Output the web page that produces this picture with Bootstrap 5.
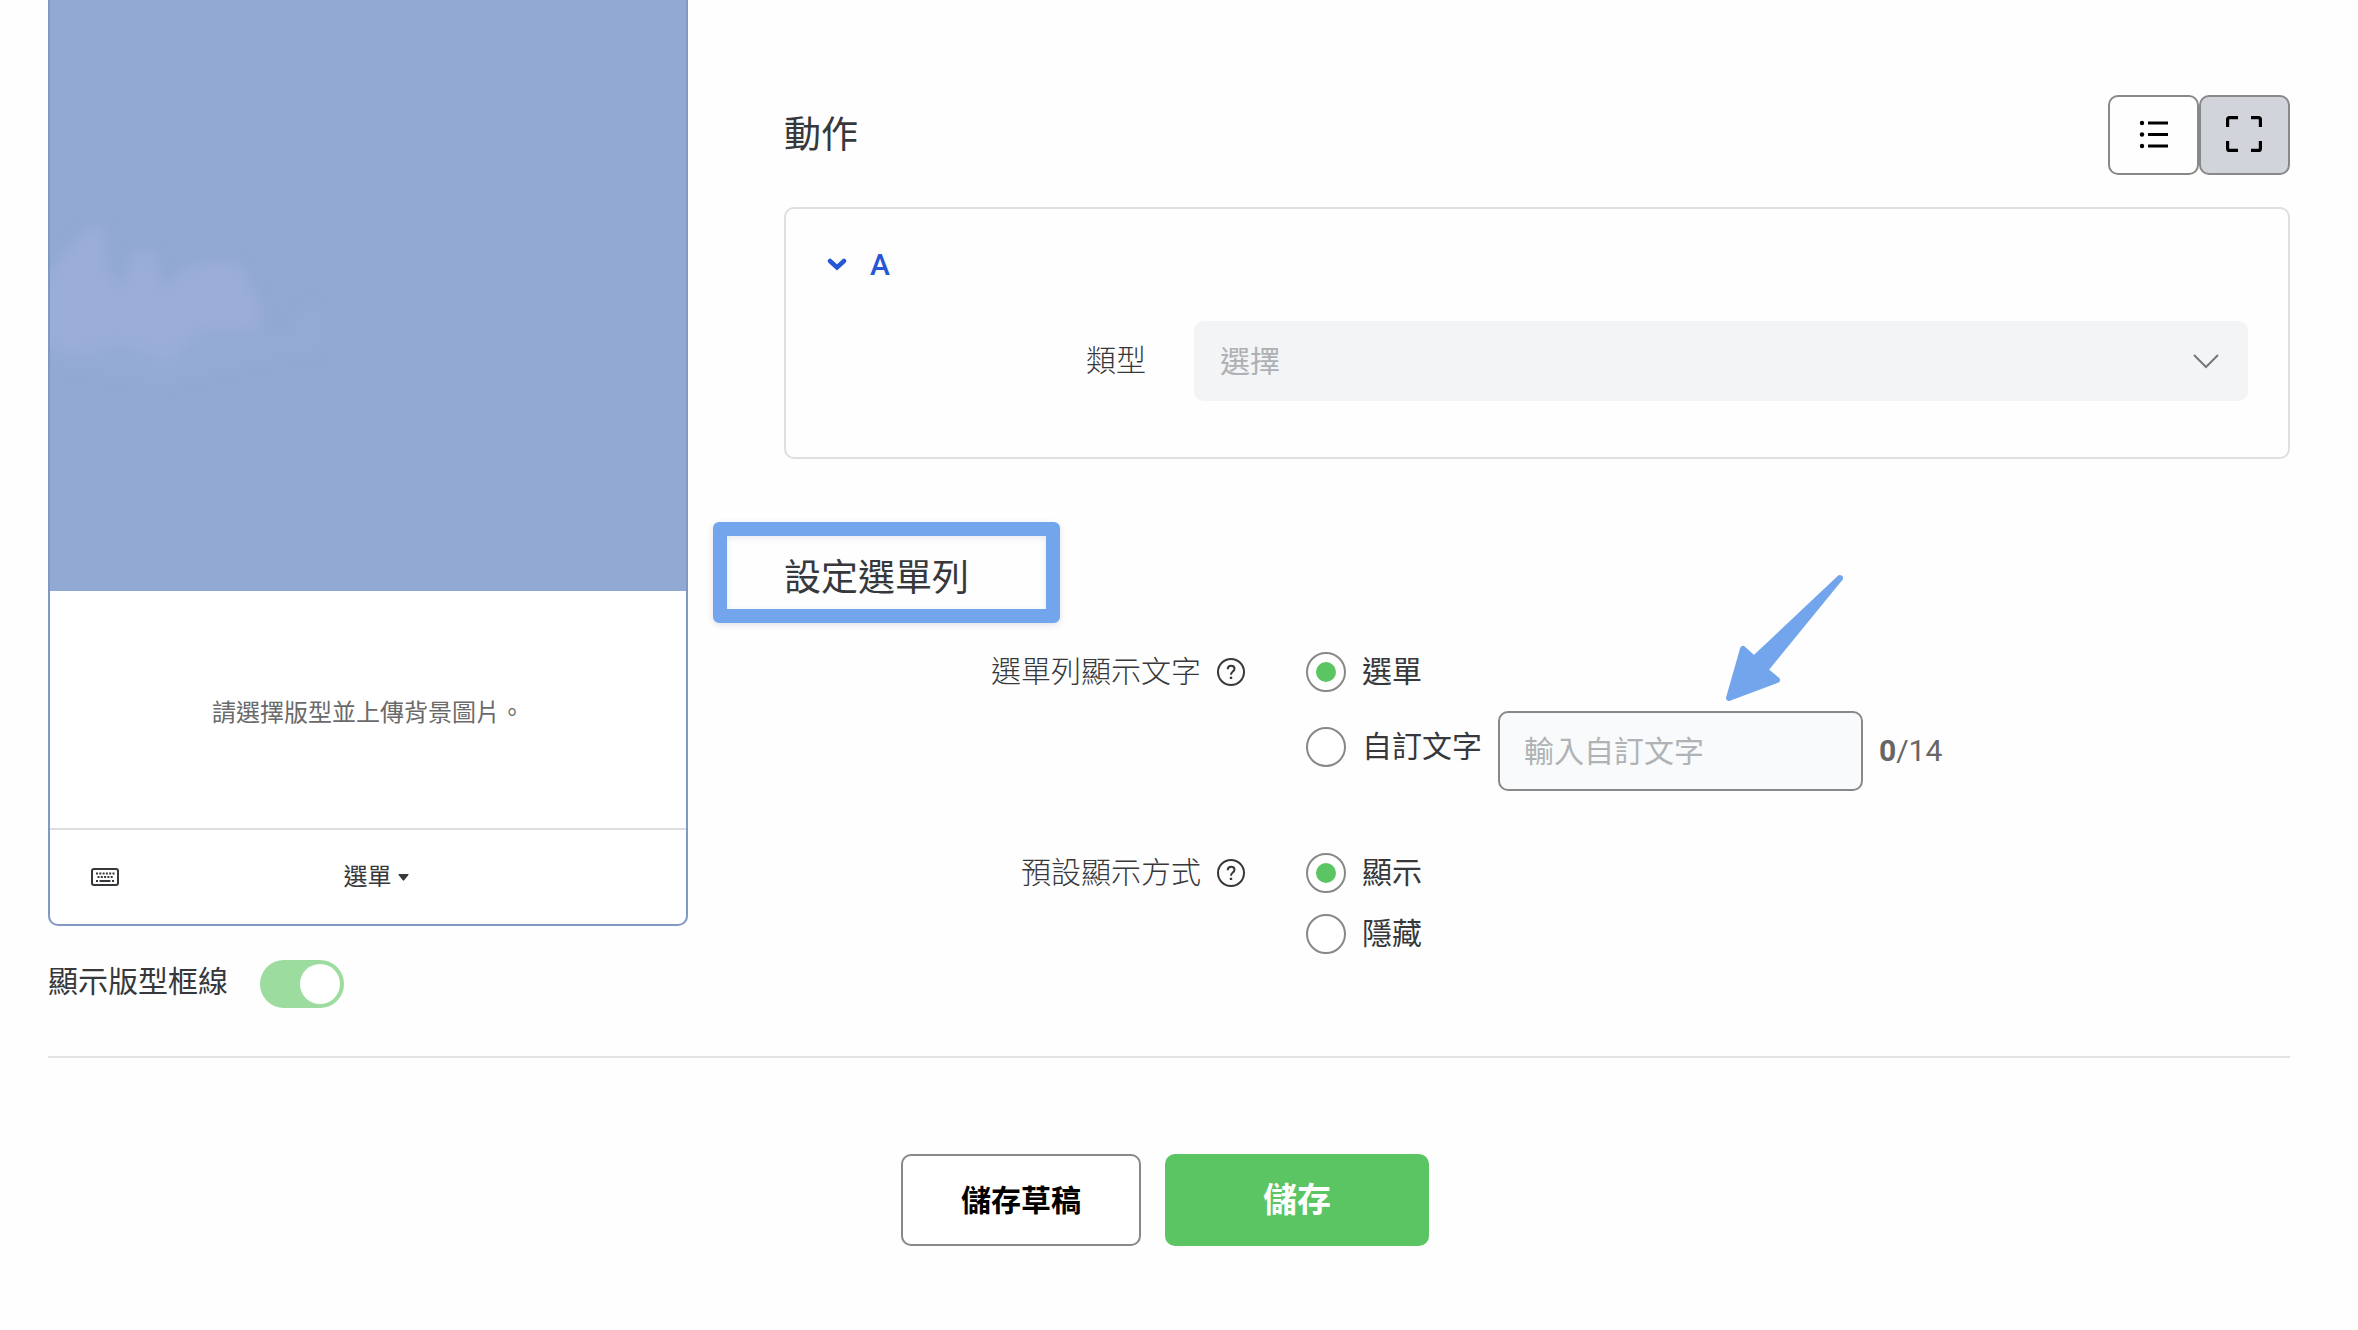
<!DOCTYPE html>
<html lang="zh-Hant">
<head>
<meta charset="utf-8">
<meta name="viewport" content="width=device-width, initial-scale=1">
<title>圖文選單</title>
<link href="https://cdn.jsdelivr.net/npm/bootstrap@5.3.0/dist/css/bootstrap.min.css" rel="stylesheet">
<style>
body { font-family: Roboto, "Noto Sans CJK TC", sans-serif; font-size: 30px; line-height: 40px; color: #36383b; background: #fefefe; }
main { padding: 0 68px 80px 48px; }
.editor { gap: 96px; }
.preview { width: 640px; }
.phone { border: 2px solid #7f98c4; border-top: 0; border-radius: 0 0 10px 10px; background: #fff; overflow: hidden; }
.sky { height: 591px; padding-top: 215px; background: #91a9d3; }
.hint { height: 237px; padding-top: 6px; font-size: 24px; color: #6a6a6a; }
.menubar { height: 96px; padding: 0 39px; border-top: 2px solid #dedede; font-size: 24px; }
.menubar button { color: inherit; font-size: inherit; gap: 6px; margin-right: 16px; }
.form-switch.frame-switch { padding: 0; margin: 30px 0 0; min-height: 0; gap: 32px; }
.form-switch.frame-switch .form-check-input { width: 84px; height: 48px; margin: 4px 0 0; border: 0; background-color: #9ddc9f; background-size: 48px 48px; opacity: 1;
  background-image: url("data:image/svg+xml,%3csvg xmlns='http://www.w3.org/2000/svg' viewBox='0 0 48 48'%3e%3ccircle cx='24' cy='24' r='20' fill='white'/%3e%3c/svg%3e"); }
.settings { padding-top: 95px; }
.section-title { font-size: 37px; line-height: 48px; font-weight: 400; margin: 0; padding-top: 2px; }
.view-btn { width: 91px; height: 80px; padding: 0; border: 2px solid #888; border-radius: 10px; }
.view-btn.active { background: #d1d4da; border-color: #888; }
.action-card { margin-top: 32px; padding: 33px 40px 56px; border: 2px solid #dfdfdf; border-radius: 10px; }
.fold { color: #2557d6; gap: 23px; font-weight: 500; text-decoration: none; line-height: 40px; }
.thin { font-weight: 300; }
.type-label { width: 320px; }
.type-row { gap: 48px; margin-top: 36px; }
.form-select.type-select { height: 80px; padding: 0 26px; font-size: 30px; font-weight: 400; color: #adb1b4; border: 0; border-radius: 10px; background-color: #f2f4f6; background-size: 28px 28px; background-position: right 28px center;
  background-image: url("data:image/svg+xml,%3csvg xmlns='http://www.w3.org/2000/svg' viewBox='0 0 28 28'%3e%3cpath d='M2 8l12 12 12-12' fill='none' stroke='%2375777a' stroke-width='2'/%3e%3c/svg%3e"); }
.bar-title { margin-top: 94px; align-self: flex-start; }
.highlight { inset: -31px -91px -20px -71px; border: 14px solid #73a5ec; border-radius: 6px; box-shadow: 0 2px 6px rgba(60, 70, 120, .15), inset 0 2px 6px rgba(60, 70, 120, .12); }
.field { gap: 60px; }
.field-name { width: 462px; gap: 16px; }
.menu-text { margin-top: 49px; }
.menu-mode { margin-top: 62px; }
.choice { gap: 16px; min-height: 0; padding: 0; margin: 0; }
.choice .form-check-input { float: none; width: 40px; height: 40px; margin: 0; border: 2px solid #888; background-color: #fff; }
.choice .form-check-input:checked { background-size: 100%; 
  background-image: url("data:image/svg+xml,%3csvg xmlns='http://www.w3.org/2000/svg' viewBox='0 0 36 36'%3e%3ccircle cx='18' cy='18' r='10' fill='%235bc463'/%3e%3c/svg%3e"); }
.custom-row { gap: 16px; margin-top: 19px; }
.custom-row .choice { height: 72px; }
.custom-input { width: 365px; height: 80px; padding: 0 24px; font-size: 30px; border: 2px solid #888; border-radius: 10px; background: #f8fafb; }
.custom-input::placeholder { color: #b0b3b5; }
.counter { color: #666; line-height: 80px; }
.arrow { left: 224px; top: -142px; }
.second { margin-top: 21px; }
.rule { margin: 48px 0 0; border-top: 2px solid #e2e2e2; opacity: 1; }
.actions { gap: 24px; margin: 96px 8px 0 0; }
.actions .btn { height: 92px; border-radius: 10px; font-weight: 700; }
.btn-draft, .btn-draft:hover { width: 240px; border: 2px solid #888; background: #fff; color: #000; font-size: 30px; }
.btn-save, .btn-save:hover { width: 264px; background: #5bc463; color: #fff; font-size: 34px; }
</style>
</head>
<body>
<main>
  <div class="editor d-flex align-items-start">
    <section class="preview flex-shrink-0">
      <div class="phone">
        <div class="sky">
          <svg class="d-block" width="290" height="180" viewBox="0 0 290 180" aria-hidden="true">
            <defs><filter id="soft" x="-20%" y="-20%" width="140%" height="140%"><feGaussianBlur stdDeviation="6"/></filter></defs>
            <g fill="#9daedb" filter="url(#soft)">
              <path d="M-10 130V70L16 36 42 10 54 12 58 54 70 72 84 38 104 34 112 72 136 52 164 46 190 48 206 80 214 104 204 116 150 116 120 146 70 128 30 140Z" opacity=".8"/>
              <path d="M-10 146 60 120 160 118 224 118 238 128 252 92 268 90 268 138 220 142 190 150 150 160 110 170 60 160Z" opacity=".25"/>
            </g>
          </svg>
        </div>
        <div class="hint d-flex align-items-center justify-content-center">請選擇版型並上傳背景圖片。</div>
        <div class="menubar d-flex align-items-center">
          <svg width="32" height="22" viewBox="0 0 32 22" fill="none" aria-hidden="true">
            <rect x="3" y="3" width="26" height="16" rx="2" stroke="#36383b" stroke-width="2"/>
            <path d="M7 7.500h18.500M8.500 11h15.500" stroke="#36383b" stroke-width="2" stroke-dasharray="2 1.300"/>
            <path d="M7 15h2M10.500 15h11M23 15h2" stroke="#36383b" stroke-width="2"/>
          </svg>
          <button type="button" class="btn border-0 p-0 flex-grow-1 d-flex align-items-center justify-content-center">選單
            <svg width="11" height="7" viewBox="0 0 11 7" aria-hidden="true"><path d="M1 0h9q1 0 .4 1L6.200 6.300q-.7.700-1.400 0L.6 1Q0 0 1 0Z" fill="#36383b"/></svg>
          </button>
        </div>
      </div>
      <div class="frame-switch form-check form-switch d-flex align-items-center">
        <label for="frameLines">顯示版型框線</label>
        <input class="form-check-input" type="checkbox" role="switch" id="frameLines" checked>
      </div>
    </section>

    <section class="settings flex-grow-1 d-flex flex-column">
      <div class="d-flex align-items-center justify-content-between">
        <h2 class="section-title">動作</h2>
        <div class="d-flex">
          <button type="button" class="btn view-btn d-flex align-items-center justify-content-center" aria-label="清單">
            <svg width="30" height="30" viewBox="0 0 30 30" aria-hidden="true"><g fill="#000"><circle cx="3" cy="3" r="2.200"/><circle cx="3" cy="14.500" r="2.200"/><circle cx="3" cy="26" r="2.200"/><path d="M9 1.500h20v3H9zM9 13h20v3H9zM9 24.500h20v3H9z"/></g></svg>
          </button>
          <button type="button" class="btn view-btn active d-flex align-items-center justify-content-center" aria-label="展開">
            <svg width="38" height="38" viewBox="0 0 38 38" fill="none" stroke="#000" stroke-width="3.200" aria-hidden="true"><path d="M1.600 11V3.600q0-2 2-2H12M25 1.600h7.400q2 0 2 2V11M34.400 25v7.400q0 2-2 2H25M12 34.400H3.600q-2 0-2-2V25"/></svg>
          </button>
        </div>
      </div>

      <div class="action-card">
        <a href="#typeRow" class="fold d-inline-flex align-items-center" data-bs-toggle="collapse" role="button" aria-expanded="true">
          <svg width="21" height="14" viewBox="0 0 21 14" aria-hidden="true"><path d="M4 3l7 6.500 7-6.500" fill="none" stroke="#2557d6" stroke-width="4.500" stroke-linecap="round"/></svg>
          <span>A</span>
        </a>
        <div id="typeRow" class="collapse show">
          <div class="type-row d-flex align-items-center">
            <label for="type" class="type-label thin text-end flex-shrink-0">類型</label>
            <select id="type" class="form-select type-select"><option>選擇</option></select>
          </div>
        </div>
      </div>

      <div class="bar-title position-relative">
        <h2 class="section-title">設定選單列</h2>
        <div class="highlight position-absolute"></div>
      </div>

      <div class="field menu-text d-flex align-items-start">
        <div class="field-name thin d-flex align-items-center justify-content-end flex-shrink-0">選單列顯示文字
          <svg width="29" height="29" viewBox="0 0 29 29" fill="none" stroke="#36383b" stroke-width="2" aria-hidden="true"><circle cx="14" cy="14" r="13"/><path d="M10.700 11.200q0-3.500 3.400-3.500t3.400 3.100q0 1.700-1.900 2.900-1.600 1.100-1.600 3"/><path d="M14 18.700v2.300" stroke-width="2.400"/></svg>
        </div>
        <div>
          <div class="choice form-check d-flex align-items-center">
            <input class="form-check-input" type="radio" name="barText" id="textMenu" checked>
            <label for="textMenu">選單</label>
          </div>
          <div class="custom-row d-flex align-items-start">
            <div class="choice form-check d-flex align-items-center">
              <input class="form-check-input" type="radio" name="barText" id="textCustom">
              <label for="textCustom">自訂文字</label>
            </div>
            <div class="position-relative">
              <input type="text" class="form-control custom-input" placeholder="輸入自訂文字" aria-label="自訂文字" maxlength="14">
              <svg class="arrow position-absolute" width="126" height="140" viewBox="0 0 126 140" aria-hidden="true"><path d="M118 9 32 90 21 80 7 129 55 111 43 101Z" fill="#73a5ec" stroke="#73a5ec" stroke-width="6" stroke-linejoin="round"/></svg>
            </div>
            <div class="counter"><b>0</b>/14</div>
          </div>
        </div>
      </div>

      <div class="field menu-mode d-flex align-items-start">
        <div class="field-name thin d-flex align-items-center justify-content-end flex-shrink-0">預設顯示方式
          <svg width="29" height="29" viewBox="0 0 29 29" fill="none" stroke="#36383b" stroke-width="2" aria-hidden="true"><circle cx="14" cy="14" r="13"/><path d="M10.700 11.200q0-3.500 3.400-3.500t3.400 3.100q0 1.700-1.900 2.900-1.600 1.100-1.600 3"/><path d="M14 18.700v2.300" stroke-width="2.400"/></svg>
        </div>
        <div>
          <div class="choice form-check d-flex align-items-center">
            <input class="form-check-input" type="radio" name="mode" id="modeShow" checked>
            <label for="modeShow">顯示</label>
          </div>
          <div class="choice second form-check d-flex align-items-center">
            <input class="form-check-input" type="radio" name="mode" id="modeHide">
            <label for="modeHide">隱藏</label>
          </div>
        </div>
      </div>
    </section>
  </div>

  <hr class="rule">
  <div class="actions d-flex justify-content-center">
    <button type="button" class="btn btn-draft">儲存草稿</button>
    <button type="button" class="btn btn-save">儲存</button>
  </div>
</main>
<script src="https://cdn.jsdelivr.net/npm/bootstrap@5.3.0/dist/js/bootstrap.bundle.min.js"></script>
</body>
</html>
